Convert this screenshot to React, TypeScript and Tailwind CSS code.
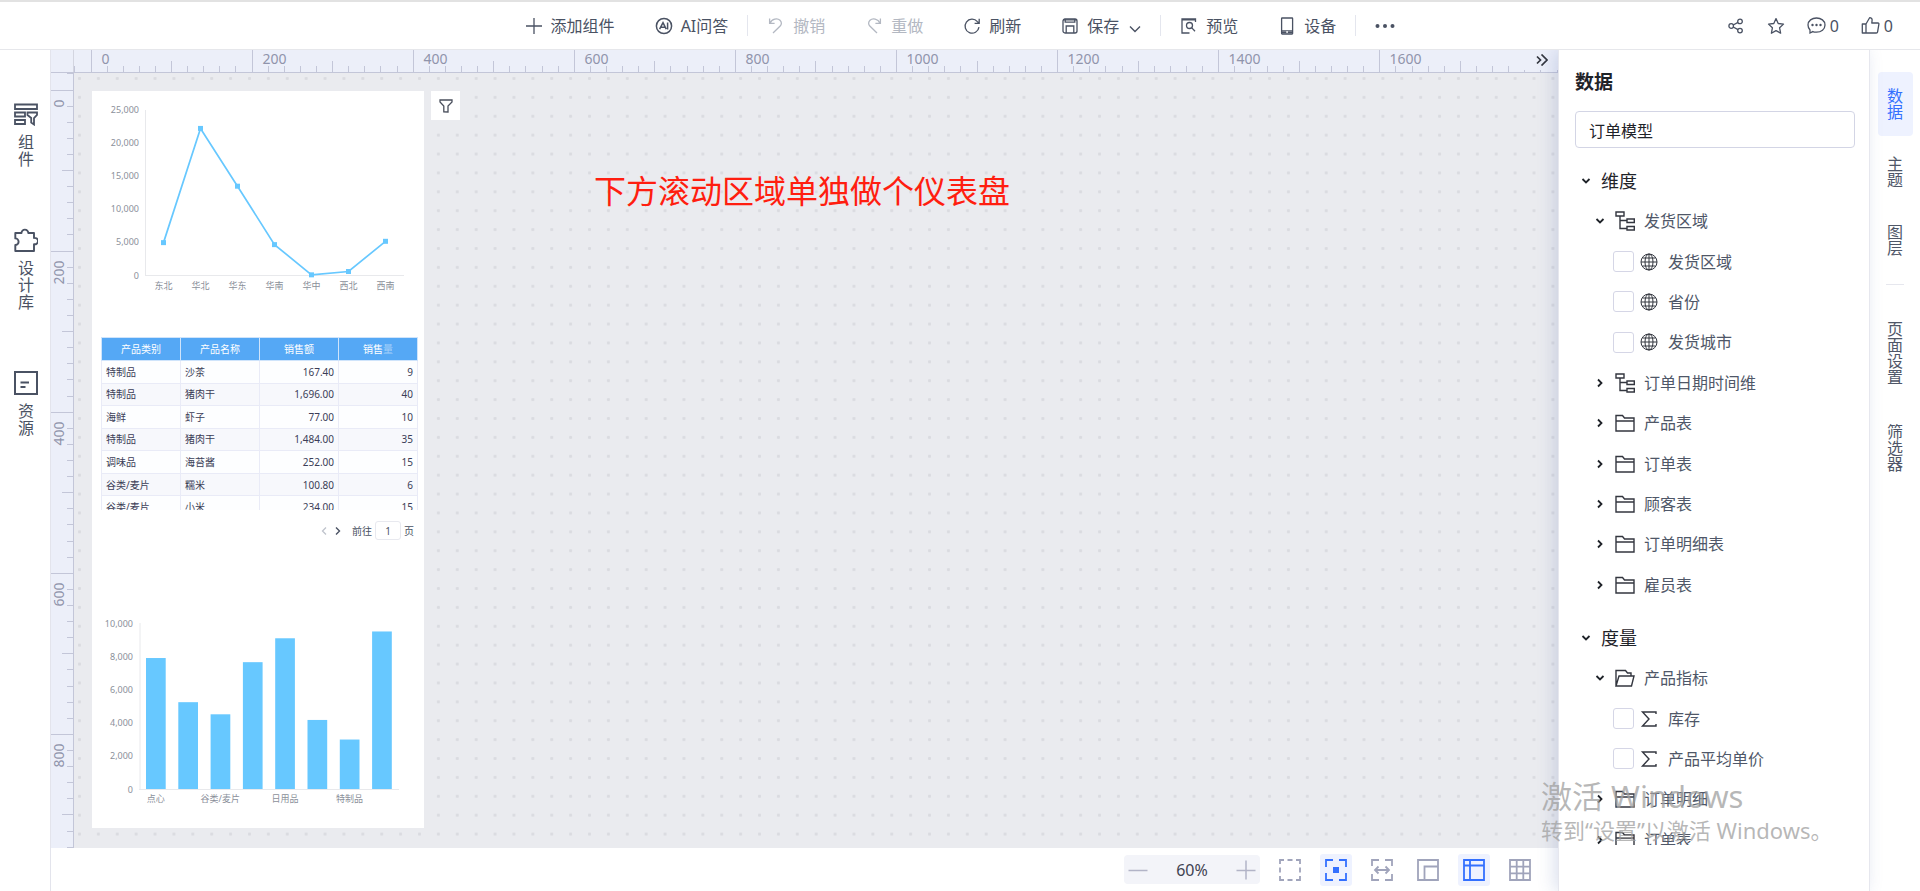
import type { ReactNode } from "react";

const RULER_STEP = 16.11;
const RULER_ORIGIN = 18;

function Icon({
  children,
  className = "size-[18px]",
  box = 18,
  stroke = 1.3,
}: {
  children: ReactNode;
  className?: string;
  box?: number;
  stroke?: number;
}) {
  return (
    <svg
      viewBox={`0 0 ${box} ${box}`}
      className={`shrink-0 ${className}`}
      fill="none"
      stroke="currentColor"
      strokeWidth={stroke}
      aria-hidden="true"
    >
      {children}
    </svg>
  );
}

/* ---------- Toolbar ---------- */

function ToolButton({ icon, label, muted, children }: { icon: ReactNode; label: string; muted?: boolean; children?: ReactNode }) {
  return (
    <button
      type="button"
      disabled={muted}
      className={`flex items-center gap-2 ${muted ? "text-[#b3b8c2]" : "text-[#4a5263]"}`}
    >
      {icon}
      <span>{label}</span>
      {children}
    </button>
  );
}

function ToolDivider() {
  return <span className="mx-[19px] h-[21px] w-px bg-[#e4e6ee]" />;
}

function Toolbar() {
  return (
    <header className="grid h-[50px] shrink-0 grid-cols-[1fr_auto_1fr] items-center border-t-2 border-b border-t-[#e2e2e2] border-b-[#e6e7eb] bg-white px-[27px] text-base leading-5 text-[#4a5263]">
      <span />
      <div className="flex items-center">
        <div className="flex items-center gap-10">
          <ToolButton label="添加组件" icon={<Icon><path d="M9 1v16M1 9h16" /></Icon>} />
          <ToolButton
            label="AI问答"
            icon={
              <Icon stroke={1.5}>
                <circle cx="9" cy="9" r="7.6" />
                <path d="M4.6 12.2 8 5.6l3.2 6.6M5.8 10.2h4.2M12.6 5.6v6.8" />
              </Icon>
            }
          />
        </div>
        <ToolDivider />
        <div className="flex items-center gap-10">
          <ToolButton muted label="撤销" icon={<Icon><path d="M2.6 1.4v5h5M3 6.2C5 1.6 10.4.8 13 3.2c2 1.9 1.6 4.4.2 5.8L6 16" /></Icon>} />
          <ToolButton muted label="重做" icon={<Icon><path d="M15.4 1.4v5h-5M15 6.2C13 1.6 7.6.8 5 3.2c-2 1.9-1.6 4.400-.2 5.800L12 16" /></Icon>} />
          <ToolButton label="刷新" icon={<Icon><path d="M16 10.2A7 7 0 1 1 14.4 4.6L16 6.2M16.2 1.8v4.600h-4.600" /></Icon>} />
          <ToolButton
            label="保存"
            icon={
              <Icon>
                <rect x="2" y="2" width="14" height="14" rx="2" />
                <path d="M4.2 2v3.2h9.6V2M5.2 16V9h7.600v7M2 2.8h14" />
              </Icon>
            }
          >
            <svg viewBox="0 0 12 8" className="mt-1.5 ml-0.5 h-2 w-3" fill="none" stroke="currentColor" strokeWidth="1.4" aria-hidden="true">
              <path d="m1 1.5 5 5 5-5" />
            </svg>
          </ToolButton>
        </div>
        <ToolDivider />
        <div className="flex items-center gap-10">
          <ToolButton
            label="预览"
            icon={
              <Icon>
                <path d="M15.5 5V2H2v14h7.5M2 2.8h13" />
                <circle cx="9.5" cy="8.5" r="3" />
                <path d="m11.6 10.6 3.400 3.600" />
              </Icon>
            }
          />
          <ToolButton
            label="设备"
            icon={
              <Icon>
                <rect x="3.6" y="1" width="11" height="16" rx=".5" />
                <path d="M3.6 13.8h11M3.6 15.5h11" />
                <path d="M8.200 15h1.800" stroke="#fff" />
              </Icon>
            }
          />
        </div>
        <ToolDivider />
        <button type="button" aria-label="更多" className="flex items-center text-[#4a5263]">
          <svg viewBox="0 0 20 6" className="h-1.5 w-5" fill="currentColor" aria-hidden="true">
            <circle cx="2.5" cy="3" r="2" />
            <circle cx="10" cy="3" r="2" />
            <circle cx="17.5" cy="3" r="2" />
          </svg>
        </button>
      </div>
      <div className="flex items-center justify-end gap-[22px]">
        <button type="button" aria-label="分享">
          <Icon>
            <circle cx="4.2" cy="9" r="2.3" />
            <circle cx="13" cy="4.4" r="2.3" />
            <circle cx="13" cy="13.6" r="2.3" />
            <path d="M6.2 8 11 5.4M6.2 10l4.8 2.6" />
          </Icon>
        </button>
        <button type="button" aria-label="收藏">
          <Icon>
            <path strokeLinejoin="round" d="m9 1.6 2.2 4.9 5.3.6-3.9 3.7 1 5.4L9 13.6l-4.6 2.6 1-5.4L1.5 7.1l5.3-.6z" />
          </Icon>
        </button>
        <button type="button" aria-label="评论" className="flex items-center gap-1">
          <Icon box={19} className="size-[19px]">
            <path d="M9.5 2C14 2 18 4.7 18 9s-3.8 7.2-8.500 7.200c-1.500 0-2.500 0-3.700-.6L3 17v-3C1.700 12.600 1 11 1 9c0-4.300 4-7 8.500-7z" />
            <g fill="currentColor" stroke="none">
              <circle cx="5.5" cy="9" r="1.2" />
              <circle cx="9.5" cy="9" r="1.2" />
              <circle cx="13.5" cy="9" r="1.2" />
            </g>
          </Icon>
          <span>0</span>
        </button>
        <button type="button" aria-label="点赞" className="flex items-center gap-1">
          <Icon box={19} className="size-[19px]">
            <path strokeLinejoin="round" d="M5 17V8l3.600-6.300c1.800 0 2.700 1.200 2.500 2.600L10.800 7H17c.7 0 1 .6.9 1.2l-1.300 7.600c-.1.7-.6 1.200-1.300 1.200zM5 8H1.300v9H5" />
          </Icon>
          <span>0</span>
        </button>
      </div>
    </header>
  );
}

/* ---------- Left navigation ---------- */

function NavItem({ icon, label }: { icon: ReactNode; label: string }) {
  return (
    <button type="button" className="flex flex-col items-center gap-2 text-[#4a5263]">
      {icon}
      <span className="w-4 text-base leading-[17px] break-all">{label}</span>
    </button>
  );
}

function LeftNav() {
  return (
    <nav className="flex w-[51px] shrink-0 flex-col items-center gap-[60px] border-r border-[#e3e4ec] bg-white pt-[52px] pl-0.5">
      <NavItem
        label="组件"
        icon={
          <Icon box={24} className="size-6" stroke={1.8}>
            <path d="M1 2.5h22v4.500H1zM1 10.5h10v4H1zM1 18h10v4H1zM13.5 10.5H23v2.500l-3 3v6.500l-2.800-2V16l-3.700-3z" />
          </Icon>
        }
      />
      <NavItem
        label="设计库"
        icon={
          <Icon box={24} className="size-6" stroke={1.9}>
            <path strokeLinejoin="round" d="M1.3 5H7.5a3.4 3.4 0 1 1 6.8 0H20v5a3.2 3.2 0 1 1 0 6.200V23H1.300v-6a3.300 3.300 0 1 0 0-6.600z" />
          </Icon>
        }
      />
      <NavItem
        label="资源"
        icon={
          <Icon box={24} className="size-6" stroke={2}>
            <path d="M1 1h22v22H1zM6.5 11.5H15M6.5 16h5" />
          </Icon>
        }
      />
    </nav>
  );
}

/* ---------- Rulers ---------- */

function tickLength(i: number) {
  if (i % 10 === 0) return 23;
  return i % 5 === 0 ? 11 : 6;
}

function HorizontalRuler() {
  const ticks = Array.from({ length: 200 }, (_, k) => k - 1);
  return (
    <svg className="h-full w-full" aria-hidden="true">
      {ticks.map((i) => {
        const x = Math.round(RULER_ORIGIN - 0.5 + i * RULER_STEP) - 0.5;
        return (
          <g key={i}>
            <path d={`M${x} 22V${22 - tickLength(i)}`} stroke="#c3c6d8" />
            {i % 10 === 0 && (
              <text x={x + 10} y="14" fontSize="14" fill="#9094ab">
                {i * 20}
              </text>
            )}
          </g>
        );
      })}
    </svg>
  );
}

function VerticalRuler() {
  const ticks = Array.from({ length: 120 }, (_, k) => k - 1);
  return (
    <svg className="h-full w-full" aria-hidden="true">
      {ticks.map((i) => {
        const y = Math.round(RULER_ORIGIN - 0.5 + i * RULER_STEP) - 0.5;
        return (
          <g key={i}>
            <path d={`M22 ${y}H${22 - tickLength(i)}`} stroke="#c3c6d8" />
            {i % 10 === 0 && (
              <text transform={`translate(13 ${y + 9}) rotate(-90)`} textAnchor="end" fontSize="14" fill="#9094ab">
                {i * 20}
              </text>
            )}
          </g>
        );
      })}
    </svg>
  );
}

/* ---------- Dashboard widgets ---------- */

const lineData = [
  { name: "东北", value: 4950 },
  { name: "华北", value: 22150 },
  { name: "华东", value: 13450 },
  { name: "华南", value: 4650 },
  { name: "华中", value: 100 },
  { name: "西北", value: 600 },
  { name: "西南", value: 5150 },
];

function LineChart() {
  const px = (i: number) => 71.5 + i * 37;
  const py = (v: number) => 184.5 - (v / 25000) * 166;
  return (
    <svg viewBox="0 0 332 246" className="block w-full" role="img" aria-label="区域销售折线图">
      {[25000, 20000, 15000, 10000, 5000, 0].map((v) => (
        <text key={v} x="47" y={py(v) + 3} textAnchor="end" fontSize="9" fill="#8b909a">
          {v.toLocaleString("en-US")}
        </text>
      ))}
      <path d="M53.5 19V185M53 184.5H312" stroke="#e8e9ec" fill="none" />
      <polyline points={lineData.map((d, i) => `${px(i)},${py(d.value)}`).join(" ")} fill="none" stroke="#67c8ff" strokeWidth="1.7" />
      {lineData.map((d, i) => (
        <g key={d.name}>
          <rect x={px(i) - 2.5} y={py(d.value) - 2.5} width="5" height="5" fill="#67c8ff" />
          <text x={px(i)} y="198" textAnchor="middle" fontSize="9" fill="#8b909a">
            {d.name}
          </text>
        </g>
      ))}
    </svg>
  );
}

const rows = [
  ["特制品", "沙茶", "167.40", "9"],
  ["特制品", "猪肉干", "1,696.00", "40"],
  ["海鲜", "虾子", "77.00", "10"],
  ["特制品", "猪肉干", "1,484.00", "35"],
  ["调味品", "海苔酱", "252.00", "15"],
  ["谷类/麦片", "糯米", "100.80", "6"],
  ["谷类/麦片", "小米", "234.00", "15"],
];

function SalesTable() {
  return (
    <div className="mr-1.5 ml-[9px]">
      <div className="h-[173px] overflow-hidden">
        <table className="h-[182px] w-full table-fixed border-collapse text-[10px] leading-3 text-[#3b3d57]">
          <thead>
            <tr className="h-[23px] bg-[#55a8f5] text-white">
              <th className="border border-[#cfe4fb] p-0 font-normal">产品类别</th>
              <th className="border border-[#cfe4fb] p-0 font-normal">产品名称</th>
              <th className="border border-[#cfe4fb] p-0 font-normal">销售额</th>
              <th className="border border-[#cfe4fb] p-0 font-normal">
                销售<span className="opacity-45">量</span>
              </th>
            </tr>
          </thead>
          <tbody>
            {rows.map((row, r) => (
              <tr key={r} className={r % 2 ? "bg-[#f7f8fc]" : "bg-[#fdfeff]"}>
                {row.map((cell, c) => (
                  <td key={c} className={`border border-[#e9ebf7] px-1 py-0 ${c > 1 ? "text-right" : "text-left"}`}>
                    {cell}
                  </td>
                ))}
              </tr>
            ))}
          </tbody>
        </table>
      </div>
      <div className="mt-[11px] flex items-center justify-end pr-1 text-[10px] leading-3 text-[#4a5263]">
        <button type="button" aria-label="上一页" className="text-[#bfc3cc]">
          <svg viewBox="0 0 6 8" className="h-2 w-1.5" fill="none" stroke="currentColor" strokeWidth="1.3">
            <path d="M5 .5 1.5 4 5 7.5" />
          </svg>
        </button>
        <button type="button" aria-label="下一页" className="ml-2">
          <svg viewBox="0 0 6 8" className="h-2 w-1.5" fill="none" stroke="currentColor" strokeWidth="1.4">
            <path d="M1 .5 4.5 4 1 7.5" />
          </svg>
        </button>
        <label className="ml-[11px] flex items-center gap-[3px]">
          前往
          <input defaultValue="1" aria-label="页码" className="h-[19px] w-[26px] rounded-[3px] border border-[#e8e9ef] text-center" />
          页
        </label>
      </div>
    </div>
  );
}

const barData = [7920, 5260, 4530, 7670, 9110, 4190, 3010, 9520];
const barLabels = ["点心", "谷类/麦片", "日用品", "特制品"];

function BarChart() {
  const py = (v: number) => 180.5 - (v / 10000) * 166;
  return (
    <svg viewBox="0 0 332 219" className="block w-full" role="img" aria-label="产品类别柱状图">
      {[10000, 8000, 6000, 4000, 2000, 0].map((v) => (
        <text key={v} x="41" y={py(v) + 3} textAnchor="end" fontSize="9" fill="#8b909a">
          {v.toLocaleString("en-US")}
        </text>
      ))}
      <path d="M48 14V180M47 180.5H307" stroke="#e8e9ec" fill="none" />
      {barData.map((v, i) => (
        <rect key={i} x={54 + i * 32.3} y={py(v)} width="19.7" height={180 - py(v)} fill="#67c8ff" />
      ))}
      {barLabels.map((name, i) => (
        <text key={name} x={63.700 + i * 64.6} y="193" textAnchor="middle" fontSize="9" fill="#8b909a">
          {name}
        </text>
      ))}
    </svg>
  );
}

/* ---------- Canvas ---------- */

function Canvas() {
  return (
    <main className="relative min-h-0 flex-1 overflow-hidden bg-[#eaebef]">
      <svg className="absolute inset-0 h-full w-full" aria-hidden="true">
        <defs>
          <pattern id="dots" width="18.89" height="18.89" patternUnits="userSpaceOnUse">
            <rect x="4" y="4" width="3" height="3" rx="1" fill="#dadbe0" />
          </pattern>
        </defs>
        <rect width="100%" height="100%" fill="url(#dots)" />
      </svg>
      <div className="relative flex h-full items-start pt-[18px] pl-[18px]">
        <section className="flex h-[737px] w-[332px] shrink-0 flex-col bg-white">
          <LineChart />
          <SalesTable />
          <div className="mt-auto">
            <BarChart />
          </div>
        </section>
        <button type="button" aria-label="筛选" className="ml-[7px] flex size-[29px] items-center justify-center bg-white text-[#4a4f5c]">
          <svg viewBox="0 0 14 14" className="size-3.5" fill="none" stroke="currentColor" strokeWidth="1.3">
            <path d="M1 1h12v2L9 7v6l-4.200-.2V7L1 3z" />
          </svg>
        </button>
        <p className="mt-20 ml-[134px] text-[32px] leading-10 text-[#ff1e10]">下方滚动区域单独做个仪表盘</p>
      </div>
    </main>
  );
}

function ViewButton({ active, label, children }: { active?: boolean; label: string; children: ReactNode }) {
  return (
    <button
      type="button"
      aria-label={label}
      className={`flex size-8 items-center justify-center rounded-[3px] ${active ? "bg-[#eef2ff] text-[#3370ff]" : "text-[#a0a4bb]"}`}
    >
      <Icon box={22} className="size-[22px]" stroke={1.8}>
        {children}
      </Icon>
    </button>
  );
}

function BottomBar() {
  return (
    <footer className="flex h-[43px] shrink-0 items-center justify-end gap-[14px] bg-white pr-[22px]">
      <div className="flex h-[29px] items-center rounded bg-[#f3f4f9] px-1 text-[#b2b4c7]">
        <button type="button" aria-label="缩小">
          <Icon box={20} className="size-5" stroke={1.5}>
            <path d="M.5 10.5h19" />
          </Icon>
        </button>
        <span className="w-[88px] text-center text-base leading-5 text-[#3f4352]">60%</span>
        <button type="button" aria-label="放大">
          <Icon box={20} className="size-5" stroke={1.5}>
            <path d="M.5 10.5h19M10 .5v19" />
          </Icon>
        </button>
      </div>
      <ViewButton label="框选">
        <path d="M1 5V1h4M8.5 1h5M17 1h4v4M21 8.5v5M21 17v4h-4M13.5 21h-5M5 21H1v-4M1 13.5v-5" />
      </ViewButton>
      <ViewButton active label="适应画布">
        <path d="M1 8V1h7M14 1h7v7M21 14v7h-7M8 21H1v-7" />
        <path d="M8 8h6v6H8z" fill="currentColor" stroke="none" />
      </ViewButton>
      <ViewButton label="适应宽度">
        <path d="M1 7V1h7M14 1h7v6M21 15v6h-7M8 21H1v-6M4 11h14M7.5 7.5 4 11l3.5 3.5M14.5 7.5 18 11l-3.5 3.5" />
      </ViewButton>
      <ViewButton label="标尺">
        <path d="M1 1h20v20H1zM7.5 21V7.5H21" />
      </ViewButton>
      <ViewButton active label="辅助线">
        <path d="M1 1h20v20H1zM7 1v20M1 6.5h20" />
      </ViewButton>
      <ViewButton label="网格">
        <path d="M1 1h20v20H1zM7.7 1v20M14.3 1v20M1 7.7h20M1 14.3h20" />
      </ViewButton>
    </footer>
  );
}

/* ---------- Data panel ---------- */

function Chevron({ open }: { open?: boolean }) {
  return (
    <svg viewBox="0 0 10 10" className="size-2.5 shrink-0 text-[#1f2329]" fill="none" stroke="currentColor" strokeWidth="1.8" aria-hidden="true">
      <path d={open ? "M1.5 3 5 6.5 8.5 3" : "M3 1.5 6.5 5 3 8.5"} />
    </svg>
  );
}

const HierarchyIcon = (
  <Icon box={20} className="size-5" stroke={1.4}>
    <path d="M1 1h8v4H1zM5 5v12.500h7M5 9.5h7M12 8h7.300v3.500H12zM12 15.5h7.300V19H12z" />
  </Icon>
);

const FolderIcon = (
  <Icon box={20} className="size-5" stroke={1.4}>
    <path d="M1 18V2.500h6.500L9.500 5H19v13zM1 8h18" />
  </Icon>
);

const OpenFolderIcon = (
  <Icon box={20} className="size-5" stroke={1.4}>
    <path d="M1 18V2.500h9.500L12.500 5H16v3M1 18 4 8h15l-2.500 10z" />
  </Icon>
);

const GlobeIcon = (
  <Icon className="size-[18px]" stroke={1}>
    <circle cx="9" cy="9" r="8" />
    <ellipse cx="9" cy="9" rx="4" ry="8" />
    <path d="M9 1v16M1 9h16M2.5 5h13M2.5 13h13" />
  </Icon>
);

const SigmaIcon = (
  <Icon className="size-[18px]" stroke={1.4}>
    <path d="M16 4V2H2.500l6.500 7-6.500 7H16v-2" />
  </Icon>
);

function Branch({ open, icon, label }: { open?: boolean; icon: ReactNode; label: string }) {
  return (
    <button type="button" aria-expanded={!!open} className="flex items-center pl-9 text-left">
      <Chevron open={open} />
      <span className="ml-[10px] flex text-[#33363f]">{icon}</span>
      <span className="ml-[9px]">{label}</span>
    </button>
  );
}

function Leaf({ icon, label }: { icon: ReactNode; label: string }) {
  return (
    <label className="flex items-center pl-[54px]">
      <input type="checkbox" className="size-[21px] shrink-0 appearance-none rounded-[3px] border border-[#d5d6e6] bg-white" />
      <span className="ml-[6px] flex text-[#33363f]">{icon}</span>
      <span className="ml-[10px]">{label}</span>
    </label>
  );
}

function GroupTitle({ label }: { label: string }) {
  return (
    <button type="button" aria-expanded className="flex h-[41px] items-center gap-[10px] pl-[22px] text-left text-lg text-[#1f2329]">
      <Chevron open />
      {label}
    </button>
  );
}

function DataPanel() {
  return (
    <aside className="relative flex w-[312px] shrink-0 flex-col border-x border-[#e6e7ee] bg-white pb-[46px] shadow-[-4px_0_16px_rgba(60,90,160,0.18)]">
      <h2 className="mt-[19px] px-4 text-[19px] leading-[26px] font-bold text-[#1f2329]">数据</h2>
      <input
        defaultValue="订单模型"
        aria-label="数据模型"
        className="mt-4 mr-[14px] ml-4 h-[37px] shrink-0 rounded border border-[#d3d5e5] px-[13px] text-base text-[#1f2329]"
      />
      <div className="mt-3 flex min-h-0 flex-1 flex-col overflow-hidden text-base leading-5 text-[#4f5768]">
        <div className="flex shrink-0 flex-col">
          <GroupTitle label="维度" />
          <div className="grid h-[404px] auto-rows-fr">
            <Branch open icon={HierarchyIcon} label="发货区域" />
            <Leaf icon={GlobeIcon} label="发货区域" />
            <Leaf icon={GlobeIcon} label="省份" />
            <Leaf icon={GlobeIcon} label="发货城市" />
            <Branch icon={HierarchyIcon} label="订单日期时间维" />
            <Branch icon={FolderIcon} label="产品表" />
            <Branch icon={FolderIcon} label="订单表" />
            <Branch icon={FolderIcon} label="顾客表" />
            <Branch icon={FolderIcon} label="订单明细表" />
            <Branch icon={FolderIcon} label="雇员表" />
          </div>
        </div>
        <div className="mt-3 flex shrink-0 flex-col">
          <GroupTitle label="度量" />
          <div className="grid h-[202px] auto-rows-fr">
            <Branch open icon={OpenFolderIcon} label="产品指标" />
            <Leaf icon={SigmaIcon} label="库存" />
            <Leaf icon={SigmaIcon} label="产品平均单价" />
            <Branch icon={FolderIcon} label="订单明细" />
            <Branch icon={FolderIcon} label="订单表" />
          </div>
        </div>
      </div>
    </aside>
  );
}

function SideTab({ active, label }: { active?: boolean; label: string }) {
  return (
    <button
      type="button"
      className={`flex w-[35px] justify-center rounded py-4 ${active ? "bg-[#eef2ff] text-[#3370ff]" : "text-[#4f5768]"}`}
    >
      <span className="w-4 text-base leading-4 break-all">{label}</span>
    </button>
  );
}

function SideTabs() {
  return (
    <nav className="flex w-[50px] shrink-0 flex-col items-center bg-white pt-[22px]">
      <div className="flex flex-col gap-1">
        <SideTab active label="数据" />
        <SideTab label="主题" />
        <SideTab label="图层" />
      </div>
      <hr className="mt-3 mb-5 w-[18px] border-[#e6e7ee]" />
      <div className="flex flex-col gap-[7px]">
        <SideTab label="页面设置" />
        <SideTab label="筛选器" />
      </div>
    </nav>
  );
}

function ActivationNotice() {
  return (
    <div className="pointer-events-none absolute right-[90px] bottom-[45px] w-[289px] whitespace-nowrap text-[#a0a0a0]/75">
      <p className="text-[31px] leading-9">激活 Windows</p>
      <p className="text-[22px] leading-8">转到“设置”以激活 Windows。</p>
    </div>
  );
}

export default function App() {
  return (
    <div className="relative flex h-screen flex-col overflow-hidden bg-white font-['Noto_Sans','Noto_Sans_CJK_SC',sans-serif]">
      <Toolbar />
      <div className="flex min-h-0 flex-1 overflow-hidden">
        <LeftNav />
        <div className="flex min-w-0 flex-1 flex-col">
          <div className="flex h-[23px] shrink-0 border-b border-[#c3c6d8] bg-[#eceff9]">
            <div className="w-[23px] shrink-0 border-r border-[#d3d5e0]" />
            <div className="relative min-w-0 flex-1 overflow-hidden">
              <HorizontalRuler />
              <button type="button" aria-label="收起面板" className="absolute top-0 right-0 flex h-5 w-9 items-center justify-center bg-[#eceff9] text-[#33363f]">
                <svg viewBox="0 0 12 12" className="ml-1 size-3" fill="none" stroke="currentColor" strokeWidth="1.7">
                  <path d="M1 2.5 4.5 6 1 9.5M5.5.5 11 6l-5.500 5.500" />
                </svg>
              </button>
            </div>
          </div>
          <div className="flex min-h-0 flex-1">
            <div className="w-[23px] shrink-0 overflow-hidden border-r border-[#c3c6d8] bg-[#eceff9]">
              <VerticalRuler />
            </div>
            <Canvas />
          </div>
          <BottomBar />
        </div>
        <DataPanel />
        <SideTabs />
      </div>
      <ActivationNotice />
    </div>
  );
}
